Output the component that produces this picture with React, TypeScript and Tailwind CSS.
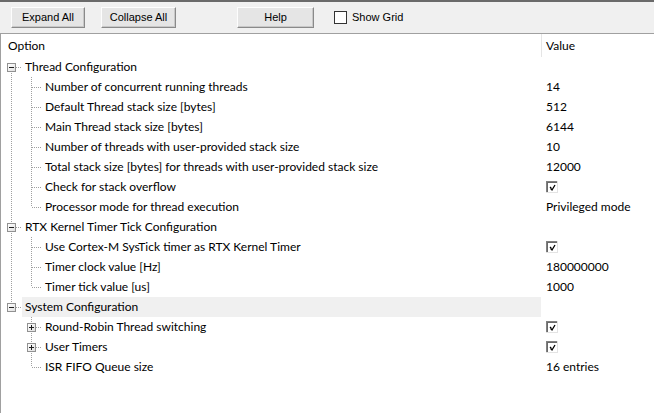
import React from "react";

type Row = {
  level: 0 | 1;
  label: string;
  value?: string;
  check?: boolean;
  box?: "minus" | "plus";
  cont?: boolean; // level1: parent column continues (vertical line at x=11)
  vTop?: boolean;
  vBottom?: boolean;
  highlight?: boolean;
};

const rows: Row[] = [
  { level: 0, label: "Thread Configuration", box: "minus", vTop: false, vBottom: true },
  { level: 1, label: "Number of concurrent running threads", value: "14", cont: true, vTop: true, vBottom: true },
  { level: 1, label: "Default Thread stack size [bytes]", value: "512", cont: true, vTop: true, vBottom: true },
  { level: 1, label: "Main Thread stack size [bytes]", value: "6144", cont: true, vTop: true, vBottom: true },
  { level: 1, label: "Number of threads with user-provided stack size", value: "10", cont: true, vTop: true, vBottom: true },
  { level: 1, label: "Total stack size [bytes] for threads with user-provided stack size", value: "12000", cont: true, vTop: true, vBottom: true },
  { level: 1, label: "Check for stack overflow", check: true, cont: true, vTop: true, vBottom: true },
  { level: 1, label: "Processor mode for thread execution", value: "Privileged mode", cont: true, vTop: true, vBottom: false },
  { level: 0, label: "RTX Kernel Timer Tick Configuration", box: "minus", vTop: true, vBottom: true },
  { level: 1, label: "Use Cortex-M SysTick timer as RTX Kernel Timer", check: true, cont: true, vTop: true, vBottom: true },
  { level: 1, label: "Timer clock value [Hz]", value: "180000000", cont: true, vTop: true, vBottom: true },
  { level: 1, label: "Timer tick value [us]", value: "1000", cont: true, vTop: true, vBottom: false },
  { level: 0, label: "System Configuration", box: "minus", vTop: true, vBottom: false, highlight: true },
  { level: 1, label: "Round-Robin Thread switching", check: true, box: "plus", cont: false, vTop: true, vBottom: true },
  { level: 1, label: "User Timers", check: true, box: "plus", cont: false, vTop: true, vBottom: true },
  { level: 1, label: "ISR FIFO Queue size", value: "16 entries", cont: false, vTop: true, vBottom: false },
];

const DOT = "#a0a0a0";

function ContCell({ on }: { on: boolean }) {
  return (
    <svg width={20} height={20} className="shrink-0 block" shapeRendering="crispEdges">
      {on && <line x1={10.5} y1={0} x2={10.5} y2={20} stroke={DOT} strokeDasharray="1 1" />}
    </svg>
  );
}

function OwnCell({ vTop, vBottom, box }: { vTop?: boolean; vBottom?: boolean; box?: "minus" | "plus" }) {
  return (
    <svg width={21} height={20} className="shrink-0 block" shapeRendering="crispEdges">
      {vTop && <line x1={10.5} y1={0} x2={10.5} y2={10} stroke={DOT} strokeDasharray="1 1" />}
      {vBottom && <line x1={10.5} y1={10} x2={10.5} y2={20} stroke={DOT} strokeDasharray="1 1" />}
      <line x1={box ? 15 : 11} y1={10.5} x2={21} y2={10.5} stroke={DOT} strokeDasharray="1 1" />
      {box && (
        <g>
          <rect x={6.5} y={6.5} width={8} height={8} fill="#ffffff" stroke="#919191" />
          <rect x={7} y={7} width={7} height={7} fill="url(#boxgrad)" />
          <line x1={8} y1={10.5} x2={13} y2={10.5} stroke="#1e1e1e" />
          {box === "plus" && <line x1={10.5} y1={8} x2={10.5} y2={13} stroke="#1e1e1e" />}
        </g>
      )}
    </svg>
  );
}

function CheckBox() {
  return (
    <svg width={12} height={12} className="block" shapeRendering="crispEdges">
      <rect x={0} y={0} width={12} height={12} fill="#ffffff" />
      <line x1={0.5} y1={0} x2={0.5} y2={12} stroke="#808080" />
      <line x1={0} y1={0.5} x2={12} y2={0.5} stroke="#808080" />
      <line x1={1.5} y1={1} x2={1.5} y2={11} stroke="#696969" />
      <line x1={1} y1={1.5} x2={11} y2={1.5} stroke="#696969" />
      <line x1={11.5} y1={0} x2={11.5} y2={12} stroke="#e3e3e3" />
      <line x1={0} y1={11.5} x2={12} y2={11.5} stroke="#e3e3e3" />
      <path
        d="M4 6 L5 7 L5 8 L6 9 L9 4"
        fill="none"
        stroke="#000000"
        strokeWidth={1.3}
        shapeRendering="geometricPrecision"
      />
    </svg>
  );
}

function Btn({ children, w }: { children: React.ReactNode; w: string }) {
  return (
    <div
      className={`${w} h-[21px] flex items-center justify-center bg-[#e5e5e5] border border-t-[#fdfdfd] border-l-[#fdfdfd] border-r-[#8a8a8a] border-b-[#8a8a8a] shadow-[inset_-1px_-1px_0_#c8c8c8] text-[11px] text-black`}
      style={{ fontFamily: "'Liberation Sans', Arial, sans-serif" }}
    >
      {children}
    </div>
  );
}

export default function App() {
  return (
    <div
      className="w-[654px] h-[413px] bg-white overflow-hidden flex flex-col"
      style={{ fontFamily: "Lato, 'Noto Sans', sans-serif" }}
    >
      <svg width={0} height={0} className="absolute">
        <defs>
          <linearGradient id="boxgrad" x1="0" y1="0" x2="1" y2="1">
            <stop offset="0" stopColor="#ffffff" />
            <stop offset="1" stopColor="#e0e0e0" />
          </linearGradient>
        </defs>
      </svg>
      {/* toolbar */}
      <div className="h-[34px] shrink-0 bg-[#f0f0f0] border-t-2 border-t-[#6a6a6a] border-b border-b-[#a0a0a0] flex items-start pt-[5px]">
        <div className="ml-[11px]">
          <Btn w="w-[74px]">Expand All</Btn>
        </div>
        <div className="ml-[16px]">
          <Btn w="w-[75px]">Collapse All</Btn>
        </div>
        <div className="ml-[61px]">
          <Btn w="w-[77px]">Help</Btn>
        </div>
        <div
          className="ml-[20px] h-[21px] flex items-center gap-[5px] text-[11px] text-black"
          style={{ fontFamily: "'Liberation Sans', Arial, sans-serif" }}
        >
          <div className="w-[13px] h-[13px] bg-white border border-[#333333]" />
          <span>Show Grid</span>
        </div>
      </div>
      {/* tree */}
      <div className="flex-1 border-l border-l-[#a0a0a0] flex flex-col text-[12px] text-black leading-none">
        <div className="h-[23px] flex shrink-0">
          <div className="w-[540px] flex items-center pl-[7px]">Option</div>
          <div className="w-px h-[23px] bg-[#e5e5e5]" />
          <div className="flex items-center pl-[4px]">Value</div>
        </div>
        {rows.map((r, i) => (
          <div key={i} className="h-[20px] flex shrink-0">
            <div className="w-[540px] flex">
              {r.level === 1 && <ContCell on={!!r.cont} />}
              <OwnCell vTop={r.vTop} vBottom={r.vBottom} box={r.box} />
              <div
                className={`flex-1 flex items-center pl-[3px] whitespace-nowrap ${
                  r.highlight ? "bg-[#f0f0f0]" : ""
                }`}
              >
                {r.label}
              </div>
            </div>
            <div className="flex-1 flex items-center pl-[5px] whitespace-nowrap">
              {r.check ? <CheckBox /> : r.value}
            </div>
          </div>
        ))}
      </div>
    </div>
  );
}
